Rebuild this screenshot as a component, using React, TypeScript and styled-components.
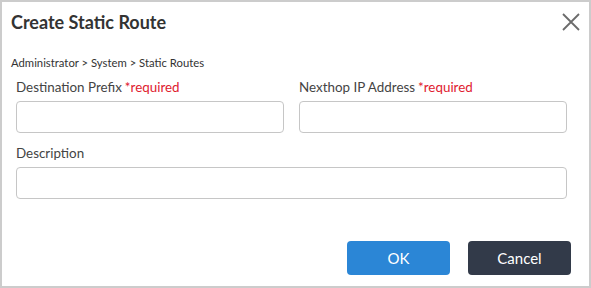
import React from "react";
import styled, { createGlobalStyle } from "styled-components";

const GlobalStyle = createGlobalStyle`
  * { box-sizing: border-box; }
  body {
    margin: 0;
    background: #ffffff;
    font-family: Lato, "Open Sans", sans-serif;
    color: #333333;
  }
`;

const fields = [
  { id: "prefix", label: "Destination Prefix", required: true },
  { id: "nexthop", label: "Nexthop IP Address", required: true },
];

const App = () => {
  return (
    <>
      <GlobalStyle />
      <Dialog>
        <Header>
          <Title>Create Static Route</Title>
          <CloseButton aria-label="close">
            <svg width="18" height="18" viewBox="0 0 18 18">
              <path d="M1 1 L17 17 M17 1 L1 17" stroke="#6b6b6b" strokeWidth="1.8" fill="none" />
            </svg>
          </CloseButton>
        </Header>
        <Breadcrumb>Administrator &gt; System &gt; Static Routes</Breadcrumb>
        <Form>
          {fields.map((f) => (
            <Field key={f.id}>
              <Label htmlFor={f.id}>
                {f.label}
                {f.required && <Required>*required</Required>}
              </Label>
              <Input id={f.id} />
            </Field>
          ))}
          <Field $wide>
            <Label htmlFor="description">Description</Label>
            <Input id="description" />
          </Field>
        </Form>
        <Footer>
          <Button $variant="primary">OK</Button>
          <Button $variant="dark">Cancel</Button>
        </Footer>
      </Dialog>
    </>
  );
};

const Dialog = styled.div`
  display: flex;
  flex-direction: column;
  width: 591px;
  height: 288px;
  border: 2px solid #cccccc;
  background: #ffffff;
`;

const Header = styled.div`
  display: flex;
  align-items: center;
  justify-content: space-between;
  padding: 8px 9px 0 9px;
  height: 32px;
`;

const Title = styled.h1`
  margin: 0;
  font-size: 18px;
  font-weight: 700;
  color: #333333;
`;

const CloseButton = styled.button`
  display: flex;
  align-items: center;
  justify-content: center;
  padding: 0;
  border: none;
  background: none;
  cursor: pointer;
`;

const Breadcrumb = styled.div`
  margin: 22px 0 0 9px;
  font-size: 11.3px;
  color: #333333;
`;

const Form = styled.div`
  display: grid;
  grid-template-columns: 1fr 1fr;
  column-gap: 15px;
  row-gap: 12px;
  padding: 10px 22px 0 14px;
`;

const Field = styled.div<{ $wide?: boolean }>`
  display: flex;
  flex-direction: column;
  grid-column: ${(p) => (p.$wide ? "1 / -1" : "auto")};
`;

const Label = styled.label`
  display: flex;
  gap: 3px;
  font-size: 13.4px;
  line-height: 16px;
  color: #444444;
  margin-bottom: 6px;
`;

const Required = styled.span`
  color: #e0202f;
`;

const Input = styled.input`
  height: 32px;
  border: 1px solid #c6c6c6;
  border-radius: 4px;
  background: #ffffff;
  font-family: inherit;
  font-size: 13px;
  padding: 0 8px;
  outline: none;
`;

const Footer = styled.div`
  display: flex;
  justify-content: flex-end;
  gap: 18px;
  margin-top: auto;
  padding: 0 18px 11px 0;
`;

const Button = styled.button<{ $variant: "primary" | "dark" }>`
  width: 103px;
  height: 34px;
  border: none;
  border-radius: 4px;
  font-family: inherit;
  font-size: 15px;
  color: #ffffff;
  cursor: pointer;
  background: ${(p) => (p.$variant === "primary" ? "#2b86d6" : "#323a49")};
`;

export default App;
